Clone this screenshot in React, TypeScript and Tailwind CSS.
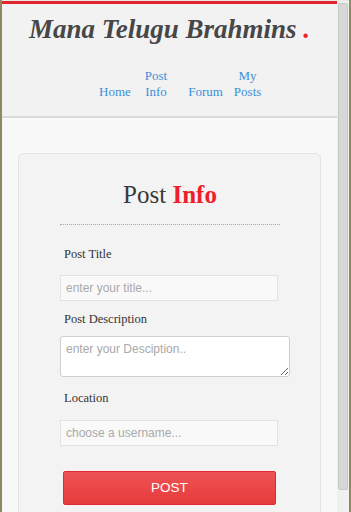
export default function App() {
  return (
    <div className="flex h-[512px] w-[351px] overflow-hidden border-x-2 border-[#8d8a63] bg-[#e9e9e9] pt-px">
      {/* Page */}
      <div className="flex w-[335px] flex-col">
        <header className="border-t-[3px] border-b-2 border-t-[#e3262d] border-b-[#dadada] bg-[#f2f2f2]">
          <h1 className="mt-[9px] text-center font-['Liberation_Serif',serif] text-[27px] font-bold italic leading-[32px] text-[#474747]">
            Mana Telugu Brahmins <span className="text-[#f0202a]">.</span>
          </h1>
          <nav className="mt-[23px] mb-[16px] flex items-end pl-[97px] font-['Liberation_Serif',serif] text-[13px] leading-[16px] text-[#3d8fd8]">
            <a className="cursor-pointer">Home</a>
            <a className="ml-[14px] cursor-pointer text-center">
              Post
              <br />
              Info
            </a>
            <a className="ml-[21px] cursor-pointer">Forum</a>
            <a className="ml-[11px] cursor-pointer text-center">
              My
              <br />
              Posts
            </a>
          </nav>
        </header>

        <main className="flex-1 bg-[#f8f8f8] px-[16px] pt-[35px]">
          <div className="rounded-md border border-[#e3e3e3] bg-[#f3f3f3] pl-[41px] pr-[40px] pt-[26px] pb-[20px] font-['Liberation_Serif',serif]">
            <h2 className="text-center text-[25px] leading-[30px] text-[#3a3a3a]">
              Post <span className="font-bold text-[#ee1f2b]">Info</span>
            </h2>
            <div className="mt-[14px] border-t border-dotted border-[#a8a8a8]" />

            <label className="mt-[21px] block pl-[4px] text-[12.5px] leading-[16px] text-[#333]">Post Title</label>
            <input
              className="mt-[13px] block h-[26px] w-[218px] border border-[#e2e2e2] bg-[#f9f9f9] px-[5px] font-['Liberation_Sans',sans-serif] text-[12px] outline-none placeholder:text-[#a9a9a9]"
              placeholder="enter your title..."
            />

            <label className="mt-[10px] block pl-[4px] text-[12.5px] leading-[16px] text-[#333]">Post Description</label>
            <textarea
              className="mt-[9px] block h-[41px] w-[230px] shrink-0 rounded-[3px] border border-[#cfcfcf] bg-white px-[5px] pt-[3px] font-['Liberation_Sans',sans-serif] text-[12px] outline-none placeholder:text-[#a9a9a9]"
              placeholder="enter your Desciption.."
            />

            <label className="mt-[13px] block pl-[4px] text-[12.5px] leading-[16px] text-[#333]">Location</label>
            <input
              className="mt-[14px] block h-[26px] w-[218px] border border-[#e2e2e2] bg-[#f9f9f9] px-[5px] font-['Liberation_Sans',sans-serif] text-[12px] outline-none placeholder:text-[#a9a9a9]"
              placeholder="choose a username..."
            />

            <button className="mt-[25px] ml-[3px] h-[34px] w-[213px] rounded-[2px] border border-[#e22a2e] bg-gradient-to-b from-[#ee5253] to-[#e63a3c] font-['Liberation_Sans',sans-serif] text-[13.5px] text-white">
              POST
            </button>
          </div>
        </main>
      </div>

      {/* Scrollbar */}
      <div className="w-[12px] bg-[#f0f0f0] pt-[2px]">
        <div className="ml-px h-[487px] w-[10px] rounded-[2px] border border-[#c9c9c9] bg-[#d7d7d7]" />
      </div>
    </div>
  );
}
